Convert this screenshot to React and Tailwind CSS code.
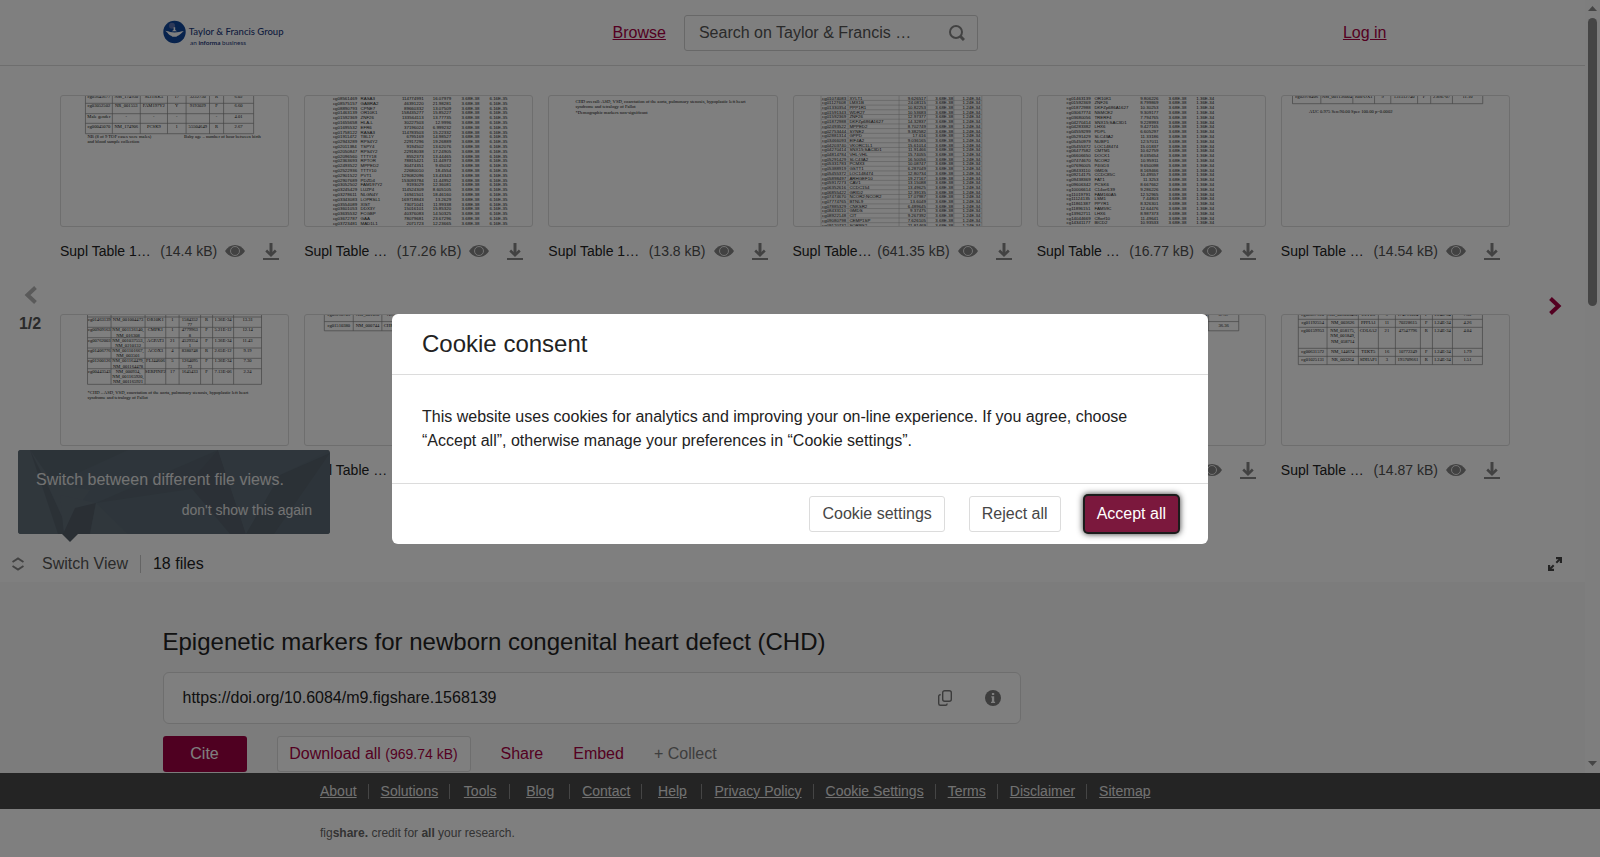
import clsx from "clsx";

// Preview drawings use tenths of a pixel as their unit (2290 x 1320).
const SERIF = "'Liberation Serif', serif";
const SANS = "'Liberation Sans', sans-serif";

const listGenes2 = [
  ["cg08561469", "RASA3", "114774991", "16.07979"],
  ["cg08575157", "GABRA2", "46391220", "21.98281"],
  ["cg08890793", "CPNE7", "89660332", "13.07509"],
  ["cg01463139", "OR10K1", "158435277", "15.85227"],
  ["cg01592369", "ZNF26", "133564113", "13.77735"],
  ["cg01655658", "HLA-L", "30227503", "12.9996"],
  ["cg01695532", "EFR6", "37196024", "6.999232"],
  ["cg01758122", "RASA3", "114783503", "15.22332"],
  ["cg01911472", "TBL1Y", "6795169", "14.98527"],
  ["cg02943289", "RPS4Y2", "22917296", "19.26889"],
  ["cg02011384", "TSPY4", "9194502", "13.62076"],
  ["cg02050847", "RPS4Y2", "22918038", "17.24905"],
  ["cg02096560", "TTTY18", "8552373", "13.44465"],
  ["cg02363693", "RPTOR", "78815421", "11.44973"],
  ["cg02493522", "MPPED2", "30474351", "9.65032"],
  ["cg02522936", "TTTY10", "22680010", "18.4554"],
  ["cg02901522", "PVT1", "129082096", "13.43343"],
  ["cg02907689", "PDZD4", "153093784", "11.44952"],
  ["cg03052502", "FAM197Y2", "9193029", "12.36081"],
  ["cg03245429", "LUZP4", "114524309", "8.605105"],
  ["cg03278611", "NLGN4Y", "16941501", "18.46160"],
  ["cg03343083", "LOPRSL1", "169718843", "13.2629"],
  ["cg03554089", "XIST", "73071041", "11.99338"],
  ["cg03601053", "DDX3Y", "15016101", "15.85320"],
  ["cg03635532", "FCGBP", "40376083", "14.50325"],
  ["cg03672787", "GAA", "78079681", "23.67296"],
  ["cg03723481", "MAD1L1", "2071723", "12.23665"],
];

const listGenes4 = [
  ["cg01074083", "XYLT1", "9.626517"],
  ["cg01127608", "LMX1B", "24.08115"],
  ["cg01330354", "PPP1R1", "10.82253"],
  ["cg01591343", "WDR27", "10.53683"],
  ["cg01592369", "ZNF26", "12.97377"],
  ["cg01872988", "DKFZp686A1627", "14.32837"],
  ["cg02493522", "MPPED2", "8.702749"],
  ["cg02753444", "SYNE2", "9.382582"],
  ["cg02881314", "GPPD", "17.616"],
  ["cg03466093", "EIF4A2", "9.036165"],
  ["cg04203740", "VKORC1L1", "15.61014"],
  ["cg04270414", "SNX15;SAC3D1", "11.91466"],
  ["cg04814784", "VHL;VHL", "15.74055"],
  ["cg05291429", "SLC43A2", "16.50056"],
  ["cg05331783", "PCMX3", "10.08747"],
  ["cg05388919", "GSTT1", "6.287049"],
  ["cg05455372", "LOC148474", "12.80734"],
  ["cg05898497", "ARHGEF10", "19.27167"],
  ["cg05917273", "CAV1", "13.15088"],
  ["cg06352616", "CCDC154", "13.49625"],
  ["cg06855422", "GRID2", "12.39135"],
  ["cg07474670", "NCOR2;NCOR2", "17.07987"],
  ["cg07774765", "BTNL9", "13.6049"],
  ["cg07885329", "CNKSR2", "6.489645"],
  ["cg08433110", "GMDS", "9.37475"],
  ["cg08922148", "CIT", "9.267392"],
  ["cg09080798", "CEMP1SP", "7.626105"],
  ["cg09120732", "SORBS2", "21.81469"],
];

const listGenes5 = [
  ["cg01463139", "OR10K1", "9.806226"],
  ["cg01592369", "ZNF26", "8.799869"],
  ["cg01872988", "DKFZp686A1627", "10.30253"],
  ["cg03067774", "NSMCE2", "9.309177"],
  ["cg03680056", "TRERF4", "7.794765"],
  ["cg04270414", "SNX15;SAC3D1", "9.228993"],
  ["cg04283382", "LHX6", "9.427165"],
  ["cg04559299", "PDPL", "6.605297"],
  ["cg05291429", "SLC43A2", "11.33186"],
  ["cg05450979", "NUBP1", "12.57011"],
  ["cg05455372", "LOC148474", "15.01837"],
  ["cg06477582", "CMTM1", "10.62759"],
  ["cg06606650", "DOCK1", "8.035654"],
  ["cg07474670", "NCOR2", "10.95911"],
  ["cg07696005", "P4GD3", "9.650098"],
  ["cg08433110", "GMDS", "8.169466"],
  ["cg09214175", "CCDC85C", "10.49557"],
  ["cg09438369", "FAT1", "11.3253"],
  ["cg09606342", "PCSK6", "8.667662"],
  ["cg10006614", "C14orf139", "9.286226"],
  ["cg11019791", "FAM160A5", "12.52965"],
  ["cg11124135", "LSM1", "7.44803"],
  ["cg11861387", "PPYR1", "8.326301"],
  ["cg11896151", "FAM59C", "12.64476"],
  ["cg13962711", "LHX6", "8.987373"],
  ["cg14044669", "C8orf10", "11.49641"],
  ["cg14341177", "BICD2", "10.93533"],
];

function Sheet({ children }) {
  return (
    <svg viewBox="10 10 2270 1300" className="block w-full" aria-hidden="true">
      {children}
    </svg>
  );
}

function GeneList({ rows, top, pitch, left, right, tail, lines }) {
  return (
    <Sheet>
      {lines && (
        <g stroke="#aaa" strokeWidth="5">
          {lines.map((x) => (
            <path key={x} d={`M${x} 0V1320`} />
          ))}
          {rows.map((row, i) => (
            <path key={i} d={`M${lines[0]} ${top + i * pitch + 8}H${lines[lines.length - 1]}`} />
          ))}
        </g>
      )}
      <g fontFamily={SANS} fontSize="44" fill="#222">
        {rows.map((row, i) => {
          const y = top + i * pitch;
          return (
            <g key={i}>
              {left.map((x, c) => (
                <text key={x} x={x} y={y}>
                  {row[c]}
                </text>
              ))}
              {right.map((x, c) => (
                <text key={x} x={x} y={y} textAnchor="end">
                  {[...row.slice(2), ...tail][c]}
                </text>
              ))}
            </g>
          );
        })}
      </g>
    </Sheet>
  );
}

function GridTable({ cols, ys, rows, notes = [] }) {
  const last = ys[ys.length - 1];
  return (
    <Sheet>
      <g stroke="#888" strokeWidth="7" fill="none">
        {cols.map((x) => (
          <path key={x} d={`M${x} 0V${last}`} />
        ))}
        {ys.map((y) => (
          <path key={y} d={`M${cols[0]} ${y}H${cols[cols.length - 1]}`} />
        ))}
      </g>
      <g fontFamily={SERIF} fontSize="46" fill="#111">
        {rows.map(([y, cells]) =>
          cells.map((cell, c) =>
            cell.split("|").map((line, l) => (
              <text key={`${y}-${c}-${l}`} x={(cols[c] + cols[c + 1]) / 2} y={y + l * 52} textAnchor="middle">
                {line}
              </text>
            ))
          )
        )}
        {notes.map(([x, y, text]) => (
          <text key={y + text} x={x} y={y}>
            {text}
          </text>
        ))}
      </g>
    </Sheet>
  );
}

const previews = {
  tof: (
    <GridTable
      cols={[254, 523, 802, 1074, 1260, 1494, 1635, 1935]}
      ys={[83, 187, 283, 387]}
      rows={[
        [28, ["cg05645677", "NM_174950", "SLITRK5", "17", "3232750", "R", "6.02"]],
        [124, ["cg03052502", "NR_001553", "FAM197Y2", "Y", "9193029", "F", "6.60"]],
        [228, ["Male gender", "-", "-", "-", "", "-", "4.01"]],
        [328, ["cg00045070", "NM_174906", "PCSK9", "1", "55504649", "R", "2.67"]],
      ]}
      notes={[
        [275, 428, "NB (8 of 9 TOF cases were males)"],
        [1240, 428, "Baby age – number of hour between birth"],
        [275, 478, "and blood sample collection"],
      ]}
    />
  ),
  list2: (
    <GeneList rows={listGenes2} top={50} pitch={48} left={[289, 565]} right={[1195, 1470, 1753, 2032]} tail={["3.68E-38", "6.16E-35"]} />
  ),
  chd: (
    <Sheet>
      <g fontFamily={SERIF} fontSize="46" fill="#111">
        <text x="274" y="82">CHD overall: ASD, VSD, coarctation of the aorta, pulmonary stenosis, hypoplastic left heart</text>
        <text x="274" y="134">syndrome and tetralogy of Fallot</text>
        <text x="274" y="186">*Demographic markers non-significant</text>
      </g>
    </Sheet>
  ),
  list4: (
    <GeneList
      rows={listGenes4}
      top={46}
      pitch={47}
      left={[290, 564]}
      right={[1329, 1600, 1873]}
      tail={["3.68E-38", "1.24E-34"]}
      lines={[280, 550, 1060, 1340, 1608, 1887]}
    />
  ),
  list5: (
    <GeneList rows={listGenes5} top={46} pitch={48} left={[295, 574]} right={[1214, 1493, 1770]} tail={["3.68E-38", "1.36E-34"]} />
  ),
  auc: (
    <GridTable
      cols={[115, 398, 718, 935, 1097, 1365, 1496, 1713, 2016]}
      ys={[87]}
      rows={[[30, ["cg02978406", "NM_001136004", "RBFOX1", "9", "131512740", "F", "2.89E-07", "11.10"]]]}
      notes={[[281, 184, "AUC 0.975 Sen:90.00 Spec 100.00 p=0.0002"]]}
    />
  ),
  chdTable: (
    <GridTable
      cols={[275, 510, 850, 1057, 1190, 1405, 1525, 1735, 2014]}
      ys={[30, 133, 237, 340, 443, 547, 703]}
      rows={[
        [70, ["cg01463139", "NM_001004473", "OR10K1", "1", "1584352|77", "R", "1.36E-34", "13.31"]],
        [174, ["cg00909163", "NM_001136140,|NM_016308", "CMPK1", "1", "4779963|8", "F", "5.21E-12", "12.14"]],
        [278, ["cg00762003", "NM_001037553,|NM_0210132", "AGPAT3", "21", "4529354|1", "F", "1.36E-34", "11.43"]],
        [382, ["cg01406776", "NM_001101667,|NM_003501", "ACOX3", "4", "8380748", "R", "2.65E-12", "9.19"]],
        [484, ["cg01200126", "NM_001164479,|NM_001164478", "FLJ44606", "5", "1264095|73", "F", "1.36E-34", "7.30"]],
        [588, ["cg00443543", "NM_000934,|NM_001165920,|NM_001165921", "SERPINF2", "17", "1645433", "F", "7.13E-06", "2.24"]],
      ]}
      notes={[
        [275, 798, "*CHD – ASD, VSD, coarctation of the aorta, pulmonary stenosis, hypoplastic left heart"],
        [275, 850, "syndrome and tetralogy of Fallot"],
      ]}
    />
  ),
  short: (
    <GridTable
      cols={[203, 492, 778, 1000, 1180, 1400, 1520, 1715, 2016]}
      ys={[76, 168]}
      rows={[
        [24, ["cg09298706", "NM_001098", "ACO2", "1", "41865129", "F", "1.24E-34", "37.37"]],
        [132, ["cg01510380", "NM_000744", "CHRNA4", "20", "61992300", "R", "1.24E-34", "36.36"]],
      ]}
    />
  ),
  long: (
    <GridTable
      cols={[173, 460, 773, 973, 1143, 1393, 1513, 1713, 2013]}
      ys={[53, 133, 343, 423, 506]}
      rows={[
        [18, ["cg02897610", "NM_001005492", "OPPL5", "9", "174791024", "F", "1.24E-34", "7.62"]],
        [102, ["cg01192554", "NM_003626", "PPFIA1", "11", "70228615", "F", "1.24E-34", "4.26"]],
        [182, ["cg00159953", "NM_058175,|NM_001849,|NM_058714", "COL6A2", "21", "47547796", "R", "1.24E-34", "4.04"]],
        [390, ["cg00631572", "NM_144674", "TEKT5", "16", "10772249", "F", "1.24E-34", "1.79"]],
        [472, ["cg01025131", "NR_003264", "SDHAP1", "3", "195709661", "R", "1.24E-34", "1.51"]],
      ]}
    />
  ),
};

const files = [
  { name: "Supl Table 1…", size: "14.4 kB", preview: "tof" },
  { name: "Supl Table …", size: "17.26 kB", preview: "list2" },
  { name: "Supl Table 1…", size: "13.8 kB", preview: "chd" },
  { name: "Supl Table…", size: "641.35 kB", preview: "list4" },
  { name: "Supl Table …", size: "16.77 kB", preview: "list5" },
  { name: "Supl Table …", size: "14.54 kB", preview: "auc" },
  { name: "Supl Table …", size: "15.12 kB", preview: "chdTable" },
  { name: "Supl Table …", size: "14.61 kB", preview: "short" },
  { name: "Supl Table …", size: "14.93 kB", preview: "short" },
  { name: "Supl Table …", size: "14.75 kB", preview: "short" },
  { name: "Supl Table …", size: "14.68 kB", preview: "short" },
  { name: "Supl Table …", size: "14.87 kB", preview: "long" },
];

const footerLinks = [
  "About",
  "Solutions",
  "Tools",
  "Blog",
  "Contact",
  "Help",
  "Privacy Policy",
  "Cookie Settings",
  "Terms",
  "Disclaimer",
  "Sitemap",
];

function Logo() {
  return (
    <svg width="122" height="26" viewBox="0 0 1220 260" role="img" aria-label="Taylor & Francis Group">
      <circle cx="115" cy="120" r="112" fill="#10479a" />
      <circle cx="90" cy="58" r="30" fill="#8f8fc0" opacity="0.6" />
      <path d="M106 72h16v28l18 12H88l18-12z" fill="#fff" />
      <path
        d="M22 108c22 0 34 8 48 12 30 6 62 6 92 0 16-4 26-10 46-8-16 8-26 24-46 38-9 6-22 9-28 18H94c-6-9-18-11-28-18-17-12-25-32-44-42z"
        fill="#fff"
      />
      <text x="258" y="150" fontFamily="Lato, sans-serif" fontSize="95" fontWeight="500" fill="#1d3a7c">
        Taylor &amp; Francis Group
      </text>
      <text x="270" y="254" fontFamily="Lato, sans-serif" fontSize="64" fill="#1d3a7c">
        an <tspan fontWeight="bold">informa</tspan> business
      </text>
    </svg>
  );
}

function EyeIcon() {
  return (
    <svg width="20" height="12" viewBox="0 0 20 12">
      <path d="M0 6C2.500 2 6 0 10 0s7.500 2 10 6c-2.500 4-6 6-10 6S2.500 10 0 6z" fill="#858585" />
      <circle cx="10" cy="6" r="4.500" fill="none" stroke="#eee" strokeWidth=".9" />
    </svg>
  );
}

function DownloadIcon() {
  return (
    <svg width="16" height="17" viewBox="0 0 16 17" fill="none" stroke="#858585">
      <path d="M8 0v12" strokeWidth="3" />
      <path d="M3.200 7.500L8 12.200l4.800-4.700" strokeWidth="2.600" />
      <path d="M0 16h16" strokeWidth="2" />
    </svg>
  );
}

function FileCard({ file }) {
  return (
    <li className="h-[219px] min-w-0">
      <div className="h-[132px] overflow-hidden rounded-[3px] border border-[#dcdcdc] bg-white">
        {previews[file.preview]}
      </div>
      <div className="mt-3 flex h-6 items-center text-[14px] whitespace-nowrap">
        <span className="min-w-0 flex-1 text-[#222]">{file.name}</span>
        <span className="text-[#505050]">({file.size})</span>
        <button className="ml-2" aria-label="Preview file">
          <EyeIcon />
        </button>
        <button className="mr-[10px] ml-[18px]" aria-label="Download file">
          <DownloadIcon />
        </button>
      </div>
    </li>
  );
}

function Tooltip() {
  return (
    <div className="absolute bottom-12 left-[18px] h-[84px] w-[312px] text-[#e6e6e6]">
      <svg
        className="absolute inset-0 h-full w-full rounded-[3px] bg-[#5c6b76]"
        viewBox="0 0 312 84"
        preserveAspectRatio="none"
        aria-hidden="true"
      >
        <path d="M14 0L55 37 72 40 41 84H0V0z" fill="#606e79" />
        <path d="M12 0L36 34 110 0z" fill="#596671" />
        <path d="M12 0L40 84h12L30 36z" fill="#56626d" />
        <path d="M42 45L78 53 57 58 46 84z" fill="#616e79" />
        <path d="M57 58L78 53 72 84H45z" fill="#545f69" />
        <path d="M78 53L110 84H72z" fill="#606e78" />
        <path d="M78 53L200 0 204 30 180 38z" fill="#586570" />
        <path d="M200 0L170 34 212 84h16z" fill="#56616c" />
        <path d="M200 0L312 0 262 25 228 84z" fill="#5f6d78" />
        <path d="M312 3L262 25 228 84h36z" fill="#56626d" />
        <path d="M312 3L256 84h56z" fill="#5b6974" />
      </svg>
      <div className="relative px-[18px] pt-[18px]">
        <p className="text-[16px] leading-6">Switch between different file views.</p>
        <p className="mt-2 text-right text-[14px] leading-5">
          <button>don't show this again</button>
        </p>
      </div>
      <svg className="absolute top-full left-[44px]" width="16" height="8" viewBox="0 0 16 8" aria-hidden="true">
        <path d="M0 0h16L8 8z" fill="#545f69" />
      </svg>
    </div>
  );
}

function Header() {
  return (
    <header className="border-b border-[#dcdcdc]">
      <div className="mx-auto flex h-[65px] max-w-[1260px] items-center">
        <a href="#home">
          <Logo />
        </a>
        <a href="#browse" className="ml-auto text-[#a80043] underline">
          Browse
        </a>
        <label className="ml-[18px] flex h-9 w-[294px] items-center rounded-[3px] border border-[#d0d0d0] pr-3 pl-[14px]">
          <input
            type="search"
            aria-label="Search"
            placeholder="Search on Taylor & Francis …"
            className="min-w-0 flex-1 outline-none placeholder:text-[#555]"
          />
          <svg width="16" height="16" viewBox="0 0 16 16" fill="none" stroke="#858585">
            <circle cx="7" cy="7" r="6" strokeWidth="2" />
            <path d="M11.300 11.300L15 15" strokeWidth="3" />
          </svg>
        </label>
        <a href="#login" className="mr-9 ml-[365px] text-[#a80043] underline">
          Log in
        </a>
      </div>
    </header>
  );
}

function Viewer() {
  return (
    <section className="relative">
      <div className="flex h-[480px]">
        <div className="flex w-[60px] shrink-0 flex-col items-center justify-center gap-2 pt-[10px]">
          <button aria-label="Previous page">
            <svg width="13" height="18" viewBox="0 0 13 18" fill="none" stroke="#b4b4b4" strokeWidth="4">
              <path d="M11.500 1.500L3.500 9l8 7.500" />
            </svg>
          </button>
          <span className="leading-6 font-bold text-[#555]">1/2</span>
        </div>
        <ul className="grid min-w-0 flex-1 grid-cols-6 content-start gap-x-[15px] pt-[29px] pr-[15px]">
          {files.map((file, i) => (
            <FileCard key={i} file={file} />
          ))}
        </ul>
        <div className="flex w-[60px] shrink-0 items-center justify-center">
          <button aria-label="Next page">
            <svg width="13" height="18" viewBox="0 0 13 18" fill="none" stroke="#a80043" strokeWidth="4">
              <path d="M1.500 1.500L9.500 9l-8 7.500" />
            </svg>
          </button>
        </div>
      </div>
      <div className="flex h-9 items-center pr-[23px] pl-3">
        <button className="flex items-center gap-[18px] text-[#555]">
          <svg width="12" height="14" viewBox="0 0 12 14" fill="none" stroke="#858585" strokeWidth="2">
            <path d="M.5 5L6 1.500 11.500 5M.5 9L6 12.500 11.500 9" />
          </svg>
          Switch View
        </button>
        <span className="mx-3 h-[18px] w-px bg-[#c8c8c8]" />
        <span className="text-[#222]">18 files</span>
        <button className="ml-auto" aria-label="Full screen">
          <svg width="14" height="14" viewBox="0 0 14 14" fill="none" stroke="#464646" strokeWidth="2">
            <path d="M8 1h5v5M6 13H1V8" strokeWidth="2.400" />
            <path d="M13 1L8.300 5.700M1 13l4.700-4.700" />
          </svg>
        </button>
      </div>
      <Tooltip />
    </section>
  );
}

function ItemDetails() {
  return (
    <section className="flex-1 bg-[#f8f8f8] pt-[44px]">
      <div className="mx-auto max-w-[1260px]">
        <h1 className="text-[24px] leading-8 text-[#222]">Epigenetic markers for newborn congenital heart defect (CHD)</h1>
        <div className="mt-[14px] flex h-[52px] max-w-[858px] items-center rounded-[6px] border border-[#dcdcdc] bg-white px-[19px]">
          <span className="flex-1 text-[#222]">https://doi.org/10.6084/m9.figshare.1568139</span>
          <button aria-label="Copy DOI">
            <svg width="14" height="16" viewBox="0 0 14 16" fill="none" stroke="#777" strokeWidth="1.400">
              <rect x="4.700" y=".7" width="8.600" height="10.600" rx="2" />
              <path d="M2.700 4.700h-.5C1.300 4.700.7 5.400.7 6.200v7.300c0 1 .7 1.800 1.700 1.800h5.200c.8 0 1.500-.6 1.500-1.500v-.4" />
            </svg>
          </button>
          <button className="ml-[33px]" aria-label="About this DOI">
            <svg width="16" height="16" viewBox="0 0 16 16">
              <circle cx="8" cy="8" r="8" fill="#7c7c7c" />
              <path d="M6.900 3h2.300v2H6.900zM6.300 6.300h2.900v5.400h.9V13H6v-1.300h.9V7.500h-.6z" fill="#fff" />
            </svg>
          </button>
        </div>
        <div className="mt-3 flex items-center gap-[30px]">
          <button className="h-9 w-[84px] rounded-[3px] bg-[#9e0042] text-white">Cite</button>
          <button className="h-9 w-[194px] rounded-[3px] border border-[#dcdcdc] bg-white text-[#a80043]">
            Download all <span className="text-[14px]">(969.74 kB)</span>
          </button>
          <button className="text-[#a80043]">Share</button>
          <button className="text-[#a80043]">Embed</button>
          <button className="text-[#7c7c7c]">+ Collect</button>
        </div>
      </div>
    </section>
  );
}

function Scrollbar() {
  return (
    <div className="flex w-[15px] shrink-0 flex-col items-center bg-[#fcfcfc] pt-[6px] pb-[7px]" aria-hidden="true">
      <svg width="9" height="5" viewBox="0 0 9 5">
        <path d="M0 5h9L4.500 0z" fill="#8b8b8b" />
      </svg>
      <div className="mt-[7px] h-[288px] w-[9px] rounded-full bg-[#8b8b8b]" />
      <svg className="mt-auto" width="9" height="5" viewBox="0 0 9 5">
        <path d="M0 0h9L4.500 5z" fill="#8b8b8b" />
      </svg>
    </div>
  );
}

function Footer() {
  return (
    <footer className="shrink-0">
      <nav className="bg-[#484848] text-[14px] text-[#e4e4e4]">
        <div className="mx-auto max-w-[960px]">
          <ul className="-ml-3 flex h-9 items-center">
            {footerLinks.map((link, i) => (
              <li
                key={link}
                className={clsx(
                  "min-w-[60px] pr-[11px] pl-3 text-center leading-[15px] whitespace-nowrap",
                  i < footerLinks.length - 1 && "border-r border-[#8a8a8a]"
                )}
              >
                <a href={`#${link}`} className="underline">
                  {link}
                </a>
              </li>
            ))}
          </ul>
        </div>
      </nav>
      <div className="bg-white">
        <p className="mx-auto flex h-12 max-w-[960px] items-center text-[12px] text-[#666]">
          <span>
            fig<b>share.</b> credit for <b>all</b> your research.
          </span>
        </p>
      </div>
    </footer>
  );
}

function CookieDialog() {
  return (
    <div className="fixed inset-0 flex items-center justify-center bg-black/50">
      <div role="dialog" aria-labelledby="cookie-title" className="w-[816px] max-w-full rounded-[6px] bg-white text-[#222]">
        <h2 id="cookie-title" className="border-b border-[#dcdcdc] px-[30px] py-[14px] text-[24px] leading-8">
          Cookie consent
        </h2>
        <p className="px-[30px] py-[30px] leading-6">
          This website uses cookies for analytics and improving your on-line experience. If you agree, choose “Accept
          all”, otherwise manage your preferences in “Cookie settings”.
        </p>
        <div className="flex justify-end gap-6 border-t border-[#dcdcdc] px-[30px] py-3">
          <button className="h-9 rounded-[3px] border border-[#dcdcdc] px-3 text-[#464646]">Cookie settings</button>
          <button className="h-9 rounded-[3px] border border-[#dcdcdc] px-3 text-[#464646]">Reject all</button>
          <button className="h-9 rounded-[3px] bg-[#7b183d] px-3 text-white shadow-[0_0_0_2px_#1c1c1c,0_0_6px_2px_#333]">
            Accept all
          </button>
        </div>
      </div>
    </div>
  );
}

export default function App() {
  return (
    <div className="flex h-screen flex-col bg-white font-['Liberation_Sans',sans-serif] text-[16px] leading-6">
      <div className="flex min-h-0 flex-1">
        <main className="flex min-w-0 flex-1 flex-col overflow-hidden">
          <Header />
          <Viewer />
          <ItemDetails />
        </main>
        <Scrollbar />
      </div>
      <Footer />
      <CookieDialog />
    </div>
  );
}
